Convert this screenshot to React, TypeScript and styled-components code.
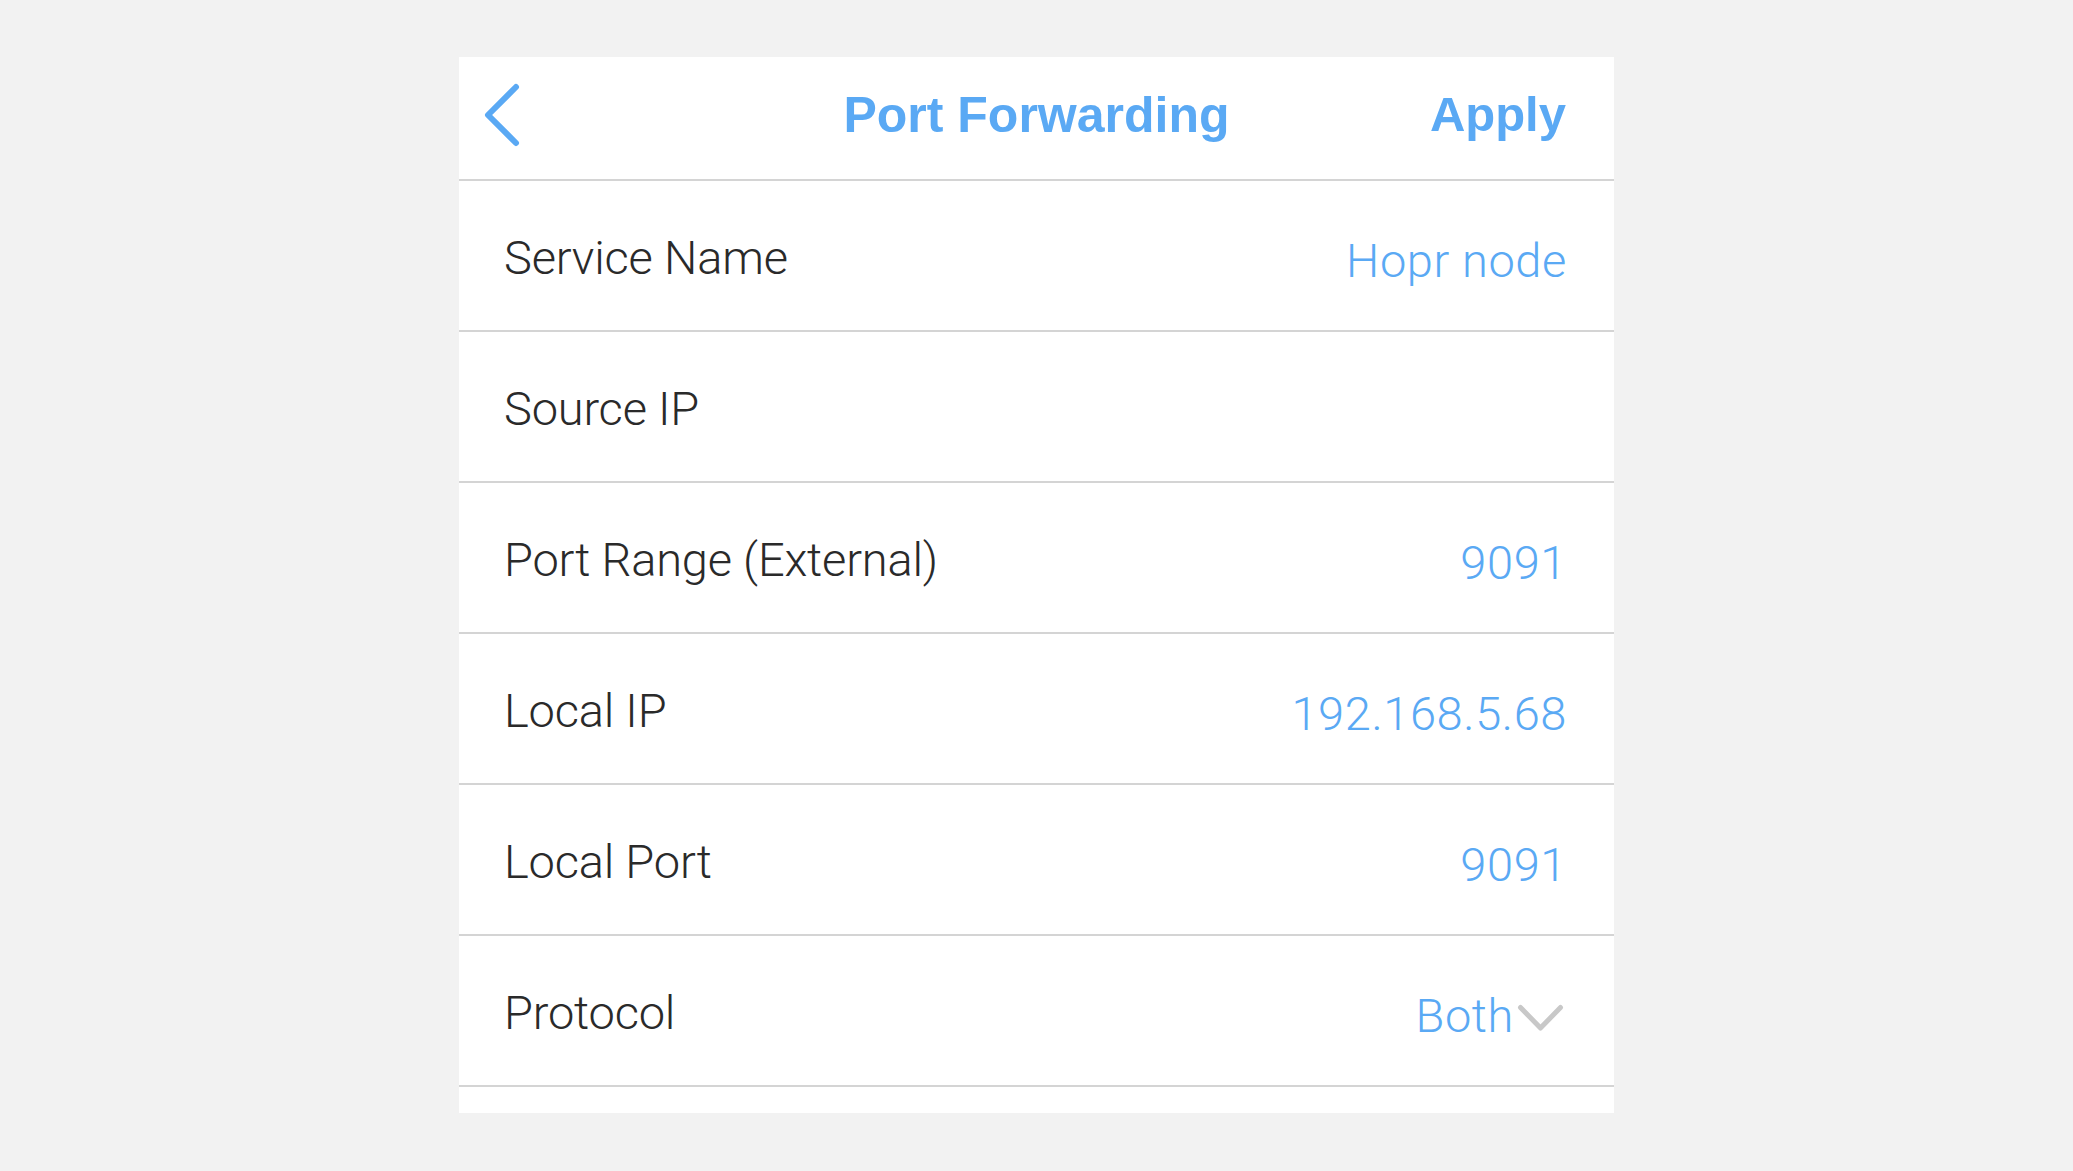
import React from "react";
import styled, { createGlobalStyle } from "styled-components";

const GlobalStyle = createGlobalStyle`
  html, body {
    margin: 0;
    padding: 0;
    background: #f2f2f2;
  }
  body {
    font-family: "Liberation Sans", Arial, sans-serif;
  }
`;

const Page = styled.div`
  min-height: 1171px;
  background: #f2f2f2;
  padding-top: 57px;
  box-sizing: border-box;
`;

const Panel = styled.div`
  width: 1155px;
  margin: 0 auto;
  background: #ffffff;
  padding-bottom: 26px;
`;

const Header = styled.header`
  height: 122px;
  box-sizing: content-box;
  border-bottom: 2px solid #d4d4d4;
  display: grid;
  grid-template-columns: 1fr auto 1fr;
  align-items: center;
`;

const BackButton = styled.button`
  justify-self: start;
  margin-left: 25px;
  margin-top: -7px;
  padding: 0;
  border: none;
  background: none;
  display: flex;
  cursor: pointer;
`;

const Title = styled.h1`
  margin: -7px 0 0;
  font-family: "Liberation Sans", Arial, sans-serif;
  font-weight: 700;
  font-size: 50px;
  line-height: 1;
  color: #5aa9f4;
`;

const ApplyButton = styled.button`
  justify-self: end;
  margin: -7px 48px 0 0;
  padding: 0;
  border: none;
  background: none;
  font-family: "Liberation Sans", Arial, sans-serif;
  font-weight: 700;
  font-size: 49px;
  line-height: 1;
  color: #5aa9f4;
  cursor: pointer;
`;

const Row = styled.div`
  height: 151px;
  box-sizing: border-box;
  border-bottom: 2px solid #d4d4d4;
  display: flex;
  align-items: center;
  justify-content: space-between;
  padding: 4px 47px 0 45px;
`;

const Label = styled.span`
  font-family: Roboto, "Liberation Sans", sans-serif;
  font-weight: 300;
  font-size: 47px;
  line-height: 1;
  letter-spacing: -0.2px;
  color: #2a2a2a;
`;

const Value = styled.span`
  display: flex;
  align-items: center;
  margin-top: 5px;
  font-family: Roboto, "Liberation Sans", sans-serif;
  font-weight: 300;
  font-size: 47px;
  line-height: 1;
  letter-spacing: 0.6px;
  color: #5aa9f4;
`;

const Caret = styled.svg`
  margin-left: 3px;
  margin-right: 3px;
  margin-top: 6px;
  flex: none;
`;

type Field = { label: string; value?: string; select?: boolean };

const fields: Field[] = [
  { label: "Service Name", value: "Hopr node" },
  { label: "Source IP" },
  { label: "Port Range (External)", value: "9091" },
  { label: "Local IP", value: "192.168.5.68" },
  { label: "Local Port", value: "9091" },
  { label: "Protocol", value: "Both", select: true },
];

export default function App() {
  return (
    <>
      <GlobalStyle />
      <Page>
        <Panel>
          <Header>
            <BackButton aria-label="Back">
              <svg width="36" height="64" viewBox="0 0 36 64">
                <path
                  d="M32 4 L4 32 L32 60"
                  fill="none"
                  stroke="#5aa9f4"
                  strokeWidth="6"
                  strokeLinecap="round"
                  strokeLinejoin="round"
                />
              </svg>
            </BackButton>
            <Title>Port Forwarding</Title>
            <ApplyButton>Apply</ApplyButton>
          </Header>
          {fields.map((f) => (
            <Row key={f.label}>
              <Label>{f.label}</Label>
              {f.value && (
                <Value>
                  {f.value}
                  {f.select && (
                    <Caret width="47" height="28" viewBox="0 0 47 28">
                      <path
                        d="M3.5 3.5 L23.5 24 L43.5 3.5"
                        fill="none"
                        stroke="#c8c8c8"
                        strokeWidth="5"
                        strokeLinecap="round"
                        strokeLinejoin="round"
                      />
                    </Caret>
                  )}
                </Value>
              )}
            </Row>
          ))}
        </Panel>
      </Page>
    </>
  );
}
